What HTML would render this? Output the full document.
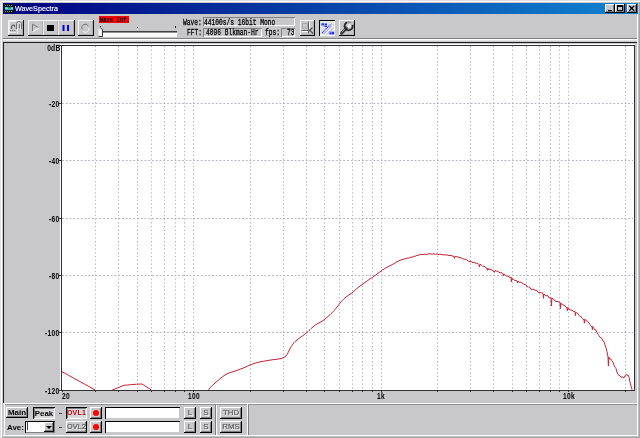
<!DOCTYPE html>
<html><head><meta charset="utf-8">
<style>
*{margin:0;padding:0;box-sizing:border-box}
html,body{width:640px;height:438px;overflow:hidden;background:#c8c7ca;font-family:"Liberation Sans",sans-serif}
.yl,.xl,.mono,.bb,.wc{will-change:transform}
.a{position:absolute}
.raised{background:#c8c7ca;box-shadow:inset -1px -1px 0 #000,inset 1px 1px 0 #fff,inset -2px -2px 0 #808080}
.raised1{background:#c8c7ca;box-shadow:inset -1px -1px 0 #101010,inset 1px 1px 0 #f4f4f4,inset -2px -2px 0 #b0b0b0}
.sunk{background:#c8c7ca;box-shadow:inset 1px 1px 0 #000,inset -1px -1px 0 #fff,inset 2px 2px 0 #808080}
.field{background:#c8c7ca;box-shadow:inset 1px 1px 0 #808080,inset -1px -1px 0 #fff}
.mono{font-family:"Liberation Mono",monospace;font-size:6.25px;line-height:7px;color:#000;white-space:pre;transform:scaleY(1.45);transform-origin:0 0;-webkit-text-stroke:0.2px #000}
.yl{position:absolute;left:19.5px;width:39.5px;text-align:right;font-family:"Liberation Sans",sans-serif;font-size:6.6px;line-height:7px;color:#000;transform:scaleY(1.3);letter-spacing:0.3px;font-weight:bold}
.xl{position:absolute;width:40px;font-family:"Liberation Sans",sans-serif;font-size:6.6px;line-height:7px;color:#000;transform:scaleY(1.3);letter-spacing:0.3px;font-weight:bold}
.xl.c{text-align:center}
.bb{font-family:"Liberation Sans",sans-serif;font-weight:bold;font-size:7.9px;line-height:12px;text-align:center;color:#000}
.dis{color:#5c5c5c;font-weight:normal;text-shadow:0.7px 0.7px 0 #f4f4f4;-webkit-text-stroke:0.2px #5c5c5c}
</style></head><body>
<!-- window frame -->
<div class="a" style="left:0;top:0;width:640px;height:438px;box-shadow:inset 1px 1px 0 #dfdfdf,inset 2px 2px 0 #fff,inset -1px -1px 0 #a4a4a6,inset -2px -2px 0 #c0c0c2"></div>
<!-- title bar -->
<div class="a" style="left:3px;top:3px;width:635px;height:11px;background:linear-gradient(to right,#000080,#1084d0)"></div>
<svg class="a" style="left:4px;top:4px" width="10" height="9"><rect x="0" y="0" width="10" height="9" fill="#101818"/><path d="M1 1.5h8M1 7.5h8" stroke="#3a9a8a" stroke-width="1" stroke-dasharray="1 1"/><path d="M1 3.2h2.5l1 1.5h2l1-1.5h1.5v2.5h-8z" fill="#40e0e0"/><path d="M1 4h8" stroke="#80ffff" stroke-width="0.8"/></svg>
<div class="a" style="left:15px;top:3px;height:11px;line-height:11px;font-size:7.2px;color:#fff;white-space:nowrap;transform:scaleY(1.1);will-change:transform;-webkit-text-stroke:0.15px #fff">WaveSpectra</div>
<div class="a raised" style="left:605px;top:4px;width:10px;height:9px"></div>
<div class="a" style="left:608px;top:10px;width:4px;height:1px;background:#000"></div>
<div class="a raised" style="left:615px;top:4px;width:10px;height:9px"></div>
<div class="a" style="left:617px;top:5px;width:6px;height:6px;border:1px solid #000;border-top-width:2px"></div>
<div class="a raised" style="left:627px;top:4px;width:10px;height:9px"></div>
<svg class="a" style="left:627px;top:4px" width="10" height="9"><path d="M2.3 1.8L7.2 6.7M7.2 1.8L2.3 6.7" stroke="#000" stroke-width="1.3"/></svg>

<!-- toolbar -->
<div class="a raised1" style="left:8px;top:20px;width:16px;height:16px"></div>
<svg class="a" style="left:8px;top:20px" width="16" height="16"><path d="M1.5 13.5V1.5H8.5" stroke="#ececec" fill="none"/><path d="M9.5 2V13.5" stroke="#f4f4f4" fill="none"/><path d="M3.5 9V6.8Q3.8 5 5.5 5Q7 5.2 6.5 7" stroke="#606060" fill="none" stroke-width="1.2"/><path d="M2 10.5H8" stroke="#707070" stroke-dasharray="1.2 0.8"/><path d="M8.5 9V3.8Q8.6 1.6 11 1.6Q13.4 1.6 13.5 3.8V9" stroke="#707070" fill="#e0e0e0" stroke-width="1"/><path d="M11.3 4V8.5" stroke="#606060"/><path d="M2 12.5H8" stroke="#e0e8f0"/></svg>
<div class="a raised1" style="left:28px;top:20px;width:47px;height:16px"></div>
<div class="a" style="left:42px;top:21px;width:1px;height:14px;background:#b4b4b4"></div>
<div class="a" style="left:43px;top:21px;width:1px;height:14px;background:#e8e8e8"></div>
<div class="a" style="left:57px;top:21px;width:1px;height:14px;background:#b4b4b4"></div>
<div class="a" style="left:58px;top:21px;width:1px;height:14px;background:#e8e8e8"></div>
<svg class="a" style="left:28px;top:20px" width="47" height="16"><path d="M4.5 11V4.2L10.5 7.5" stroke="#787878" fill="none" stroke-width="1"/><path d="M5 11.5L11 8" stroke="#fff" fill="none"/><rect x="19" y="5" width="7" height="6" fill="#000"/><rect x="34.5" y="5" width="2" height="6" fill="#0000ff"/><rect x="39" y="5" width="2" height="6" fill="#0000ff"/></svg>
<div class="a raised1" style="left:78px;top:20px;width:16px;height:16px"></div>
<svg class="a" style="left:78px;top:20px" width="16" height="16"><path d="M4.2 9.5A3.4 3.4 0 0 1 10.3 6" stroke="#707070" fill="none" stroke-width="1"/><path d="M10.8 8A3.4 3.4 0 0 1 5 11.2" stroke="#f0f0f0" fill="none" stroke-width="1"/></svg>

<div class="a" style="left:99px;top:16px;width:30px;height:7px;background:#ff0000"></div>
<div class="a mono" style="left:99.5px;top:15.5px;font-size:5.5px;line-height:6px;transform:scaleY(1.45);font-weight:bold;-webkit-text-stroke:0">Wave Inf.</div>
<div class="a" style="left:100px;top:26px;width:1px;height:2px;background:#202020"></div>
<div class="a" style="left:137px;top:27px;width:1px;height:1px;background:#202020"></div>
<div class="a" style="left:175px;top:26px;width:1px;height:2px;background:#202020"></div>
<div class="a" style="left:99px;top:31px;width:78px;height:6px;background:#f8f8f8;box-shadow:inset 0 1px 0 #404040,inset 0 2px 0 #909090"></div>
<svg class="a" style="left:97px;top:26px" width="8" height="12"><path d="M1.5 10.5V4L3.5 1.5L5.5 4V10.5Z" fill="#f4f4f4" stroke="#e0e0e0" stroke-width="0.8"/><path d="M3.5 1.5L5.5 4V10.5H1.5" stroke="#303030" fill="none" stroke-width="1"/></svg>
<div class="a mono" style="left:183px;top:18px">Wave:</div>
<div class="a field" style="left:203px;top:17px;width:92px;height:9px"></div>
<div class="a mono" style="left:204px;top:18px">44100s/s 16bit Mono</div>
<div class="a mono" style="left:187px;top:28.4px">FFT:</div>
<div class="a field" style="left:203px;top:28px;width:59px;height:9px"></div>
<div class="a mono" style="left:206px;top:28.4px">4096 Blkman-Hr</div>
<div class="a mono" style="left:265px;top:28.4px">fps:</div>
<div class="a field" style="left:281px;top:28px;width:14px;height:9px"></div>
<div class="a mono" style="left:287px;top:28.4px">73</div>

<div class="a raised1" style="left:300px;top:20px;width:15px;height:16px"></div>
<svg class="a" style="left:300px;top:20px" width="15" height="16"><path d="M2.5 3.5h5v4.5h-5z" stroke="#a8a8a8" fill="none"/><path d="M8.5 1.5V13.5M1.5 10.5H8.5" stroke="#606060" fill="none"/><path d="M9 11L12.5 7.5M9.5 10L13 13.5" stroke="#505050" fill="none" stroke-width="1.1"/><path d="M9.5 2V9M2 11.5H8" stroke="#fff" fill="none"/></svg>
<div class="a" style="left:319px;top:20px;width:16px;height:16px;background:#e6e6e6;box-shadow:inset 1px 1px 0 #000,inset -1px -1px 0 #fff"></div>
<svg class="a" style="left:319px;top:21px" width="16" height="15"><path d="M2 2h4v3.5h-4z" fill="#a8b0ff"/><path d="M2.5 2.5h2.5v1.5h-2.5zM6 2.5h2v1.5h-2zM5.5 4.5h2.5v1.5h-2.5z" fill="#1830ff"/><path d="M10 13h5.5v-3h-5.5z" fill="#a8b0ff"/><path d="M10.5 11.5h2v2h-2zM13 11h2v2.5h-2z" fill="#1830ff"/><path d="M3 12L11.5 3.5" stroke="#1830ff" stroke-width="1.1" stroke-dasharray="1.2 0.6" fill="none"/><path d="M4.5 13L13 4.5" stroke="#3048ff" stroke-width="0.9" stroke-dasharray="0.8 0.9" fill="none"/><path d="M7 14.5L15 6.5M12 2.5L15 4" stroke="#707070" stroke-width="0.8" stroke-dasharray="0.8 1.2" fill="none"/></svg>
<div class="a raised1" style="left:339px;top:20px;width:16px;height:16px"></div>
<svg class="a" style="left:339px;top:20px" width="16" height="16"><path d="M2.5 13.2L7.5 8.2" stroke="#383838" stroke-width="3" stroke-linecap="round"/><path d="M2.6 12.2L7 7.8" stroke="#b8b8b8" stroke-width="0.9"/><path d="M13.4 4.8A4 4 0 1 1 8.2 2.4" stroke="#2a2a2a" fill="none" stroke-width="2"/><path d="M8.2 2.4Q10.5 1.6 12.2 2.6" stroke="#8a8a8a" stroke-width="1.4" fill="none"/><circle cx="10.2" cy="6" r="1.7" fill="#f6f6f6"/><path d="M11.8 8.3A2.6 2.6 0 0 1 7.6 7.5" stroke="#9a9a9a" stroke-width="0.8" fill="none"/></svg>

<div class="a" style="left:3px;top:38px;width:635px;height:1px;background:#808080"></div>
<div class="a" style="left:3px;top:39px;width:635px;height:1px;background:#fff"></div>
<div class="a" style="left:3px;top:40px;width:635px;height:1px;background:#e4e4e6"></div>

<!-- graph panel -->
<div class="a" style="left:3px;top:42px;width:634px;height:361px;box-shadow:inset 1px 1px 0 #202020"></div>


<div class="a" style="left:637px;top:14px;width:1px;height:422px;background:#fff"></div>

<div class="yl" style="top:43.7px;left:20.5px">0dB</div><div class="yl" style="top:100.3px">-20</div><div class="yl" style="top:157.3px">-40</div><div class="yl" style="top:215.3px">-60</div><div class="yl" style="top:272.3px">-80</div><div class="yl" style="top:329.3px">-100</div><div class="yl" style="top:387.3px">-120</div>
<div class="xl" style="left:62.0px;top:392.3px">20</div><div class="xl c" style="left:173.6px;top:392.3px">100</div><div class="xl c" style="left:361.1px;top:392.3px">1k</div><div class="xl c" style="left:548.6px;top:392.3px">10k</div>
<div class="a" style="left:60px;top:44px;width:575px;height:348px;box-shadow:inset 1px 1px 0 #fff"></div>
<div class="a" style="left:61px;top:45px;width:574px;height:346px;background:#fff;box-shadow:inset 1px 1px 0 #303030,inset -1px -1px 0 #303030"></div>
<svg class="a" style="left:0;top:0" width="640" height="438">
<path d="M95.5 46V390 M118.5 46V390 M137.5 46V390 M151.5 46V390 M164.5 46V390 M175.5 46V390 M184.5 46V390 M193.5 46V390 M250.5 46V390 M283.5 46V390 M306.5 46V390 M324.5 46V390 M339.5 46V390 M352.5 46V390 M362.5 46V390 M372.5 46V390 M381.5 46V390 M437.5 46V390 M470.5 46V390 M493.5 46V390 M512.5 46V390 M526.5 46V390 M539.5 46V390 M550.5 46V390 M559.5 46V390 M568.5 46V390 M625.5 46V390" stroke="#acacbe" stroke-width="1" stroke-dasharray="1.2 2.55" fill="none"/>
<path d="M62 103.5H633 M62 160.5H633 M62 218.5H633 M62 275.5H633 M62 332.5H633" stroke="#b4b4c8" stroke-width="1" stroke-dasharray="1.9 1.85" fill="none"/>
<path d="M62.5 390V392 M95.5 390V392 M118.5 390V392 M137.5 390V392 M151.5 390V392 M164.5 390V392 M175.5 390V392 M184.5 390V392 M193.5 390V392 M250.5 390V392 M283.5 390V392 M306.5 390V392 M324.5 390V392 M339.5 390V392 M352.5 390V392 M362.5 390V392 M372.5 390V392 M381.5 390V392 M437.5 390V392 M470.5 390V392 M493.5 390V392 M512.5 390V392 M526.5 390V392 M539.5 390V392 M550.5 390V392 M559.5 390V392 M568.5 390V392 M625.5 390V392 M59 45.5H61 M59 103.5H61 M59 160.5H61 M59 218.5H61 M59 275.5H61 M59 332.5H61 M59 390.5H61" stroke="#303030" stroke-width="1" fill="none"/>
<path d="M62.0 371.7 L95.2 390.0 M112.3 390.0 L124.0 385.3 L136.6 384.2 L142.0 384.0 L151.4 390.0 M208.4 390.0 L209.0 389.2 L210.0 387.9 L211.0 386.9 L212.0 385.9 L213.0 384.9 L214.0 384.0 L215.0 383.1 L216.0 382.2 L217.0 381.3 L218.0 380.5 L219.0 379.6 L220.0 378.8 L221.0 378.0 L222.0 377.2 L223.0 376.4 L224.0 375.7 L225.0 375.0 L226.0 374.4 L227.0 373.9 L228.0 373.4 L229.0 373.0 L230.0 372.6 L231.0 372.2 L232.0 372.0 L233.0 371.7 L234.0 371.4 L235.0 371.1 L236.0 370.7 L237.0 370.4 L238.0 370.0 L239.0 369.6 L240.0 369.2 L241.0 368.8 L242.0 368.5 L243.0 368.1 L244.0 367.7 L245.0 367.3 L246.0 366.8 L247.0 366.3 L248.0 365.8 L249.0 365.3 L250.0 364.9 L251.0 364.5 L252.0 364.2 L253.0 363.8 L254.0 363.5 L255.0 363.2 L256.0 362.9 L257.0 362.6 L258.0 362.4 L259.0 362.1 L260.0 361.9 L261.0 361.7 L262.0 361.5 L263.0 361.3 L264.0 361.2 L265.0 361.0 L266.0 360.8 L267.0 360.6 L268.0 360.4 L269.0 360.3 L270.0 360.1 L271.0 360.0 L272.0 359.8 L273.0 359.7 L274.0 359.6 L275.0 359.5 L276.0 359.4 L277.0 359.2 L278.0 359.1 L279.0 358.9 L280.0 358.7 L281.0 358.5 L282.0 358.2 L283.0 357.8 L284.0 357.4 L285.0 356.8 L286.0 356.0 L287.0 354.6 L288.0 352.8 L289.0 350.6 L290.0 348.5 L291.0 346.9 L292.0 345.4 L293.0 344.0 L294.0 342.6 L295.0 341.5 L296.0 341.0 L297.0 340.0 L298.0 339.1 L299.0 338.4 L300.0 337.6 L301.0 336.9 L302.0 336.2 L303.0 335.5 L304.0 334.8 L305.0 334.0 L306.0 333.2 L307.0 332.4 L308.0 331.5 L309.0 330.5 L310.0 329.6 L311.0 328.6 L312.0 327.7 L313.0 326.9 L314.0 326.0 L315.0 325.3 L316.0 324.6 L317.0 324.0 L318.0 323.4 L319.0 322.9 L320.0 322.3 L321.0 321.8 L322.0 321.2 L323.0 320.5 L324.0 319.8 L325.0 319.0 L326.0 318.2 L327.0 317.3 L328.0 316.5 L329.0 315.6 L330.0 314.7 L331.0 313.7 L332.0 312.8 L333.0 311.8 L334.0 310.7 L335.0 309.5 L336.0 308.3 L337.0 307.0 L338.0 305.7 L339.0 304.4 L340.0 303.1 L341.0 301.9 L342.0 300.8 L343.0 299.8 L344.0 298.8 L345.0 297.9 L346.0 297.1 L347.0 296.3 L348.0 295.6 L349.0 294.9 L350.0 294.2 L351.0 293.6 L352.0 293.0 L353.0 292.1 L354.0 291.2 L355.0 290.3 L356.0 289.4 L357.0 288.5 L358.0 287.7 L359.0 286.9 L360.0 286.1 L361.0 285.4 L362.0 284.7 L363.0 284.0 L364.0 283.3 L365.0 282.6 L366.0 281.8 L367.0 281.1 L368.0 280.4 L369.0 279.6 L370.0 278.9 L371.0 278.3 L372.0 277.6 L373.0 277.0 L374.0 276.3 L375.0 275.6 L376.0 274.8 L377.0 274.1 L378.0 273.3 L379.0 272.6 L380.0 271.8 L381.0 271.0 L382.0 270.3 L383.0 269.6 L384.0 269.0 L385.0 268.4 L386.0 267.8 L387.0 267.3 L388.0 266.8 L389.0 266.2 L390.0 265.7 L391.0 265.2 L392.0 264.7 L393.0 264.1 L394.0 263.6 L395.0 263.0 L396.0 262.3 L397.0 261.7 L398.0 261.5 L399.0 260.6 L400.0 260.4 L401.0 260.0 L402.0 259.5 L403.0 259.5 L404.0 258.9 L405.0 258.9 L406.0 258.4 L407.0 258.1 L408.0 258.1 L409.0 258.1 L410.0 257.3 L411.0 257.1 L412.0 257.1 L413.0 257.0 L414.0 256.4 L415.0 256.0 L416.0 256.2 L417.0 255.1 L418.0 255.6 L419.0 254.9 L420.0 254.6 L421.0 254.4 L422.0 254.4 L423.0 254.7 L424.0 254.1 L425.0 254.3 L426.0 254.3 L427.0 254.1 L428.0 254.2 L429.0 253.7 L430.0 253.7 L431.0 253.8 L432.0 254.3 L433.0 254.0 L434.0 253.9 L435.0 254.2 L436.0 254.1 L437.0 254.0 L438.0 254.5 L439.0 254.5 L440.0 254.1 L441.0 254.5 L442.0 254.5 L443.0 254.9 L444.0 254.9 L445.0 254.6 L446.0 255.4 L447.0 254.7 L448.0 255.2 L449.0 255.7 L450.0 255.3 L451.0 255.8 L452.0 255.5 L453.0 256.3 L454.0 256.5 L454.4 258.2 L454.9 256.3 L455.0 256.5 L456.0 257.0 L457.0 256.5 L458.0 257.1 L459.0 257.3 L460.0 257.5 L461.0 257.7 L462.0 258.5 L463.0 259.0 L464.0 258.8 L465.0 259.5 L466.0 259.2 L467.0 260.3 L468.0 260.7 L469.0 261.5 L470.0 261.7 L471.0 261.5 L472.0 262.0 L473.0 262.7 L474.0 262.3 L475.0 263.1 L476.0 263.0 L477.0 263.3 L478.0 263.6 L479.0 264.8 L479.4 266.9 L479.9 264.4 L480.0 264.4 L481.0 264.9 L482.0 265.5 L483.0 266.6 L484.0 266.1 L485.0 267.0 L486.0 267.7 L487.0 268.5 L487.4 270.3 L487.9 268.1 L488.0 269.0 L489.0 269.5 L490.0 269.2 L491.0 269.7 L492.0 270.0 L493.0 270.9 L494.0 271.3 L494.4 272.4 L494.9 270.7 L495.0 270.5 L496.0 270.8 L497.0 271.2 L498.0 271.5 L499.0 272.2 L500.0 272.8 L501.0 272.7 L502.0 272.8 L503.0 273.8 L503.4 276.0 L503.9 273.9 L504.0 274.2 L505.0 274.9 L506.0 275.9 L507.0 276.0 L508.0 276.3 L509.0 276.9 L510.0 277.5 L511.0 277.2 L511.4 282.0 L511.9 277.8 L512.0 278.9 L513.0 279.3 L514.0 280.0 L515.0 280.5 L516.0 280.4 L517.0 281.0 L517.4 282.7 L517.9 281.1 L518.0 281.0 L519.0 282.3 L520.0 282.0 L521.0 282.4 L522.0 283.0 L523.0 283.5 L524.0 284.3 L525.0 284.5 L526.0 285.1 L527.0 286.0 L527.4 287.1 L527.9 286.6 L528.0 286.5 L529.0 287.5 L530.0 287.5 L531.0 289.3 L532.0 289.4 L533.0 289.1 L534.0 289.6 L535.0 290.1 L536.0 290.6 L537.0 290.6 L538.0 292.1 L539.0 292.8 L540.0 292.4 L541.0 292.9 L542.0 292.8 L543.0 293.4 L543.4 298.3 L543.9 294.0 L544.0 294.3 L545.0 294.6 L546.0 296.1 L547.0 295.5 L548.0 295.8 L549.0 297.9 L550.0 297.8 L551.0 297.6 L551.4 306.0 L551.9 298.2 L552.0 298.7 L553.0 298.4 L554.0 299.7 L555.0 301.0 L556.0 301.3 L557.0 301.6 L558.0 301.4 L559.0 302.1 L560.0 302.4 L560.4 308.6 L560.9 302.9 L561.0 303.9 L562.0 304.1 L563.0 305.2 L564.0 305.1 L565.0 305.6 L566.0 307.2 L567.0 308.1 L567.4 310.8 L567.9 307.3 L568.0 308.5 L569.0 309.1 L570.0 309.7 L571.0 310.2 L572.0 310.0 L573.0 311.1 L574.0 311.4 L575.0 311.5 L575.4 315.6 L575.9 312.3 L576.0 312.2 L577.0 313.2 L578.0 313.9 L579.0 315.3 L580.0 316.5 L581.0 316.5 L582.0 318.1 L583.0 319.1 L584.0 319.9 L584.4 323.2 L584.9 319.1 L585.0 319.8 L586.0 320.4 L587.0 321.3 L588.0 322.1 L589.0 323.0 L590.0 324.6 L591.0 325.9 L592.0 326.8 L592.4 329.6 L592.9 326.3 L593.0 327.2 L594.0 328.6 L595.0 330.0 L596.0 330.2 L597.0 332.4 L598.0 334.3 L599.0 335.7 L600.0 337.3 L601.0 337.7 L602.0 338.6 L603.0 341.0 L604.0 341.7 L605.0 345.0 L606.0 347.8 L607.0 351.8 L608.0 356.8 L608.4 366.0 L608.9 357.0 L609.0 358.5 L610.0 358.9 L611.0 359.2 L612.0 360.8 L613.0 362.4 L614.0 365.2 L615.0 367.2 L616.0 368.6 L617.0 372.2 L618.0 374.5 L619.0 375.2 L620.0 375.9 L621.0 377.3 L622.0 377.0 L623.0 377.1 L624.0 377.8 L625.0 376.0 L626.0 374.5 L627.0 375.1 L628.0 375.0 L629.0 377.2 L630.0 382.1 L631.0 386.0 L632.0 389.6 L632.0 390.0" stroke="#c42434" stroke-width="1" fill="none" stroke-linejoin="miter" stroke-miterlimit="2"/>
<path d="" stroke="#c82828" stroke-width="0.9" fill="none"/>
</svg>

<!-- bottom panel -->
<div class="a" style="left:4px;top:403px;width:633px;height:1px;background:#fff"></div>
<div class="a" style="left:4px;top:403px;width:1px;height:33px;background:#fff"></div>
<div class="a" style="left:5px;top:404px;width:632px;height:1px;background:#909090"></div>
<div class="a" style="left:3px;top:435px;width:635px;height:1px;background:#fff"></div>

<div class="a raised bb" style="left:6px;top:407px;width:22px;height:11px;line-height:12px">Main</div>
<div class="a sunk bb" style="left:33px;top:407px;width:22px;height:12px;line-height:13px;background:#d8d8d8">Peak</div>
<div class="a wc" style="left:6.5px;top:421px;font-weight:bold;font-size:7.9px;line-height:13px">Ave:</div>
<div class="a" style="left:25px;top:421px;width:30px;height:12px;background:#fff;box-shadow:inset 1px 1px 0 #000,inset -1px -1px 0 #808080"></div>
<div class="a" style="left:27px;top:422px;width:1px;height:8px;background:#404040"></div>
<div class="a raised" style="left:44px;top:422px;width:10px;height:10px"></div>
<svg class="a" style="left:44px;top:422px" width="10" height="10"><path d="M2 4h6l-3 3z" fill="#000"/></svg>
<div class="a" style="left:59px;top:413px;width:3px;height:1px;background:#404040"></div>
<div class="a" style="left:59px;top:427px;width:3px;height:1px;background:#404040"></div>
<div class="a sunk bb" style="left:66px;top:407px;width:21px;height:12px;color:#d00010;background:#d8d8d8;line-height:12.5px;font-size:7px;letter-spacing:0.2px">OVL1</div>
<div class="a raised bb dis" style="left:66px;top:421px;width:21px;height:12px;line-height:12px;font-size:7.2px;letter-spacing:0.2px">OVL2</div>
<div class="a raised" style="left:90px;top:407px;width:12px;height:12px"></div>
<div class="a" style="left:92.5px;top:409.5px;width:6.5px;height:6.5px;border-radius:50%;background:#ff0000"></div>
<div class="a raised" style="left:90px;top:421px;width:12px;height:12px"></div>
<div class="a" style="left:92.5px;top:423.5px;width:6.5px;height:6.5px;border-radius:50%;background:#ff0000"></div>
<div class="a" style="left:105px;top:407px;width:75px;height:12px;background:#fff;box-shadow:inset 1px 1px 0 #000,inset -1px -1px 0 #c8c7ca"></div>
<div class="a" style="left:105px;top:421px;width:75px;height:12px;background:#fff;box-shadow:inset 1px 1px 0 #000,inset -1px -1px 0 #c8c7ca"></div>
<div class="a raised bb dis" style="left:184px;top:407px;width:12px;height:12px;line-height:12.5px">L</div>
<div class="a raised bb dis" style="left:200px;top:407px;width:12px;height:12px;line-height:12.5px">S</div>
<div class="a raised bb dis" style="left:184px;top:421px;width:12px;height:12px;line-height:12.5px">L</div>
<div class="a raised bb dis" style="left:200px;top:421px;width:12px;height:12px;line-height:12.5px">S</div>
<div class="a" style="left:215px;top:405px;width:1px;height:30px;background:#808080"></div>
<div class="a" style="left:216px;top:405px;width:1px;height:30px;background:#fff"></div>
<div class="a raised bb dis" style="left:220px;top:407px;width:22px;height:12px;line-height:12.5px">THD</div>
<div class="a raised bb dis" style="left:220px;top:421px;width:22px;height:12px;line-height:12.5px">RMS</div>
<div class="a" style="left:247px;top:404px;width:1px;height:31px;background:#fff"></div>
<div class="a" style="left:248px;top:405px;width:1px;height:30px;background:#808080"></div>
</body></html>
